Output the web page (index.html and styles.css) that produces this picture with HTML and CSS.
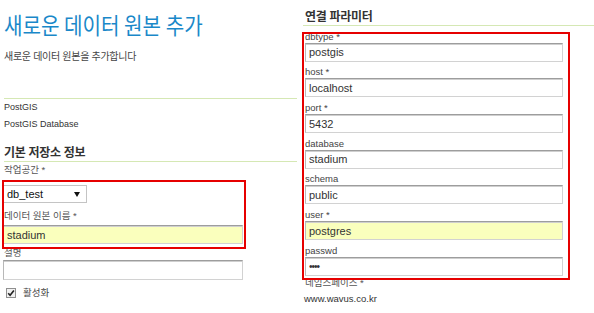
FILE: index.html
```html
<!DOCTYPE html>
<html>
<head>
    <meta charset="UTF-8">
    <title>새로운 데이터 원본 추가</title>
    <link rel="stylesheet" href="styles.css">
</head>
<body>
    <div class="page">
        <div class="colleft">
            <h1 class="title">새로운 데이터 원본 추가</h1>
            <p class="desc">새로운 데이터 원본을 추가합니다</p>

            <div class="storetype">
                <div>PostGIS</div>
                <div>PostGIS Database</div>
            </div>

            <h3 class="section">기본 저장소 정보</h3>
            <label class="lbl">작업공간 *</label>
            <div class="select">
                <span>db_test</span>
                <svg class="caret" width="6" height="5" viewBox="0 0 6 5"><polygon points="0,0 6,0 3,5" fill="#111"/></svg>
            </div>
            <label class="lbl lbl2">데이터 원본 이름 *</label>
            <input class="inp inpleft auto" type="text" value="stadium">
            <label class="lbl lbl3">설명</label>
            <input class="inp inpleft tall" type="text" value="">
            <div class="checkrow">
                <svg class="checkbox" width="10" height="10" viewBox="0 0 10 10">
                    <rect x="0.5" y="0.5" width="9" height="9" fill="#f1f1f1" stroke="#8f8f8f"/>
                    <path d="M2.2 5.2 L4.1 7.3 L7.9 2.4" fill="none" stroke="#222" stroke-width="1.6"/>
                </svg>
                <span>활성화</span>
            </div>
        </div>

        <div class="colright">
            <h3 class="section sectionright">연결 파라미터</h3>

            <label class="rlbl">dbtype *</label>
            <input class="inp inpright" type="text" value="postgis">
            <label class="rlbl">host *</label>
            <input class="inp inpright" type="text" value="localhost">
            <label class="rlbl">port *</label>
            <input class="inp inpright" type="text" value="5432">
            <label class="rlbl">database</label>
            <input class="inp inpright" type="text" value="stadium">
            <label class="rlbl">schema</label>
            <input class="inp inpright" type="text" value="public">
            <label class="rlbl">user *</label>
            <input class="inp inpright auto" type="text" value="postgres">
            <label class="rlbl">passwd</label>
            <input class="inp inpright pw" type="text" value="••••">

            <label class="lbl nslbl">네임스페이스 *</label>
            <div class="nsurl">www.wavus.co.kr</div>
        </div>

        <!-- red highlight boxes drawn over the form -->
        <div class="mark markleft"></div>
        <div class="mark markright"></div>
    </div>
</body>
</html>
```

FILE: styles.css
```css
body {
    margin: 0;
    background: #fff;
    color: #333;
    font-family: "Liberation Sans", "Noto Sans CJK KR", sans-serif;
}

.page {
    position: relative;
    display: flex;
    width: 594px;
    height: 313px;
    overflow: hidden;
}

.colleft {
    width: 293px;
    margin-left: 4px;
}

.colright {
    flex: 1;
    margin-left: 6px;
}

.title {
    margin: 10px 0 0;
    font-family: "Noto Sans CJK KR", sans-serif;
    font-size: 23px;
    line-height: 28px;
    font-weight: 400;
    white-space: nowrap;
    color: #1a88c9;
    transform: scaleX(0.875);
    transform-origin: left center;
}

.desc {
    margin: 12px 0 0;
    font-size: 10px;
    line-height: 14px;
    letter-spacing: -0.3px;
    color: #444;
}

.storetype {
    margin-top: 34px;
    border-top: 1px solid #d5e8b4;
    font-size: 9px;
    line-height: 17px;
    color: #333;
}

.section {
    margin: 12px 0 0;
    font-size: 12px;
    line-height: 16px;
    font-weight: bold;
    letter-spacing: -0.3px;
    color: #333;
    border-bottom: 1px solid #d5e8b4;
}

.sectionright {
    margin-top: 9px;
    padding-left: 2px;
}

.lbl {
    display: block;
    font-size: 9.5px;
    line-height: 14px;
    color: #555;
    margin-top: 1px;
}

.lbl2 {
    margin-top: 6px;
}

.lbl3 {
    margin-top: 2px;
}

.select {
    display: flex;
    align-items: center;
    justify-content: space-between;
    box-sizing: border-box;
    width: 84px;
    height: 18px;
    margin: 8px 0 0 -1px;
    padding: 0 6px 0 3px;
    border: 1px solid #c4c4c4;
    font-size: 11px;
    color: #111;
    background: #fff;
}

.inp {
    display: block;
    box-sizing: border-box;
    height: 19px;
    padding: 0 3px;
    border: 1px solid #d2d2d2;
    border-top-color: #9d9d9d;
    border-left-color: #b8b8b8;
    box-shadow: inset 0 1px 0 #cfcfcf;
    font-family: "Liberation Sans", sans-serif;
    font-size: 11px;
    color: #333;
    background: #fff;
    outline: none;
}

.inpleft {
    width: 240px;
    margin: 2px 0 0 -1px;
}

.tall {
    height: 20px;
    margin-top: 0;
}

.auto {
    background: #faffbd;
}

.checkrow {
    display: flex;
    align-items: center;
    gap: 7px;
    margin: 8px 0 0 2px;
    font-size: 9.5px;
    line-height: 10px;
    color: #444;
}

.rlbl {
    display: block;
    padding-top: 3.7px;
    font-size: 9.5px;
    line-height: 13px;
    color: #444;
    margin-left: 2px;
}

.inpright {
    width: 258px;
    margin-left: 2px;
}

.pw {
    font-size: 10px;
    letter-spacing: -1px;
}

.nslbl {
    margin: 0 0 0 2px;
}

.nsurl {
    margin: 1px 0 0 1px;
    font-size: 9.5px;
    line-height: 16px;
    color: #333;
}

.mark {
    position: absolute;
    box-sizing: border-box;
    border: 2px solid #e60000;
}

.markleft {
    left: 2px;
    top: 180px;
    width: 244px;
    height: 69px;
}

.markright {
    left: 302px;
    top: 32px;
    width: 268px;
    height: 248px;
}
```
